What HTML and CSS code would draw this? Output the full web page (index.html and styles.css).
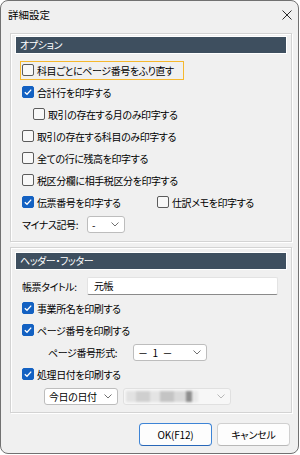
FILE: index.html
```html
<html lang="ja">

<head>
    <title>詳細設定</title>
    <link rel="stylesheet" href="styles.css">
</head>

<body>
    <div class="window">
        <div class="titlebar">
            <span class="title">詳細設定</span>
            <svg class="close" width="10" height="10" viewBox="0 0 10 10">
                <path d="M0.5 0.5 L9.5 9.5 M9.5 0.5 L0.5 9.5" stroke="#2b2b2b" stroke-width="1" fill="none"/>
            </svg>
        </div>

        <div class="content">
            <!-- オプション -->
            <div class="group group-options">
                <div class="group-head">オプション</div>
                <div class="rows">
                    <div class="row">
                        <label class="check focus"><span class="box"></span>科目ごとにページ番号をふり直す</label>
                    </div>
                    <div class="row">
                        <label class="check"><span class="box on"><svg width="10" height="10" viewBox="0 0 10 10"><path d="M1.8 5.2 L4 7.3 L8.2 2.6" stroke="#fff" stroke-width="1.3" fill="none"/></svg></span>合計行を印字する</label>
                    </div>
                    <div class="row sub">
                        <label class="check"><span class="box"></span>取引の存在する月のみ印字する</label>
                    </div>
                    <div class="row">
                        <label class="check"><span class="box"></span>取引の存在する科目のみ印字する</label>
                    </div>
                    <div class="row">
                        <label class="check"><span class="box"></span>全ての行に残高を印字する</label>
                    </div>
                    <div class="row">
                        <label class="check"><span class="box"></span>税区分欄に相手税区分を印字する</label>
                    </div>
                    <div class="row">
                        <label class="check wide"><span class="box on"><svg width="10" height="10" viewBox="0 0 10 10"><path d="M1.8 5.2 L4 7.3 L8.2 2.6" stroke="#fff" stroke-width="1.3" fill="none"/></svg></span>伝票番号を印字する</label>
                        <label class="check"><span class="box"></span>仕訳メモを印字する</label>
                    </div>
                    <div class="row">
                        <span class="field-label minus-label">マイナス記号:</span>
                        <div class="select select-minus">
                            <span>-</span>
                            <svg width="8" height="5" viewBox="0 0 8 5"><path d="M0.5 0.5 L4 4 L7.5 0.5" stroke="#707070" fill="none"/></svg>
                        </div>
                    </div>
                </div>
            </div>

            <!-- ヘッダー・フッター -->
            <div class="group group-header">
                <div class="group-head">ヘッダー・フッター</div>
                <div class="rows">
                    <div class="row">
                        <span class="field-label minus-label">帳票タイトル:</span>
                        <div class="textbox">元帳</div>
                    </div>
                    <div class="row">
                        <label class="check"><span class="box on"><svg width="10" height="10" viewBox="0 0 10 10"><path d="M1.8 5.2 L4 7.3 L8.2 2.6" stroke="#fff" stroke-width="1.3" fill="none"/></svg></span>事業所名を印刷する</label>
                    </div>
                    <div class="row">
                        <label class="check"><span class="box on"><svg width="10" height="10" viewBox="0 0 10 10"><path d="M1.8 5.2 L4 7.3 L8.2 2.6" stroke="#fff" stroke-width="1.3" fill="none"/></svg></span>ページ番号を印刷する</label>
                    </div>
                    <div class="row page-format">
                        <span class="field-label format-label">ページ番号形式:</span>
                        <div class="select select-format">
                            <span class="format-value">－ 1 －</span>
                            <svg width="8" height="5" viewBox="0 0 8 5"><path d="M0.5 0.5 L4 4 L7.5 0.5" stroke="#707070" fill="none"/></svg>
                        </div>
                    </div>
                    <div class="row">
                        <label class="check"><span class="box on"><svg width="10" height="10" viewBox="0 0 10 10"><path d="M1.8 5.2 L4 7.3 L8.2 2.6" stroke="#fff" stroke-width="1.3" fill="none"/></svg></span>処理日付を印刷する</label>
                    </div>
                    <div class="row date-row">
                        <div class="select select-date">
                            <span>今日の日付</span>
                            <svg width="8" height="5" viewBox="0 0 8 5"><path d="M0.5 0.5 L4 4 L7.5 0.5" stroke="#707070" fill="none"/></svg>
                        </div>
                        <div class="select select-blur">
                            <span class="blur"></span>
                            <svg width="8" height="5" viewBox="0 0 8 5"><path d="M0.5 0.5 L4 4 L7.5 0.5" stroke="#b8b8b8" fill="none"/></svg>
                        </div>
                    </div>
                </div>
            </div>

            <div class="buttons">
                <button class="btn default">OK(F12)</button>
                <button class="btn">キャンセル</button>
            </div>
        </div>
    </div>
</body>
</html>
```

FILE: styles.css
```css
* {
    box-sizing: border-box;
}

body {
    margin: 0;
    background: #ffffff;
    font-family: "Noto Sans CJK JP", "Noto Sans", sans-serif;
    font-size: 10px;
    letter-spacing: -0.4px;
    font-feature-settings: "palt";
    color: #000000;
}

.window {
    width: 299px;
    height: 454px;
    border: 1px solid #717171;
    border-radius: 8px;
    background: #f0f0f0;
    overflow: hidden;
    display: flex;
    flex-direction: column;
}

.titlebar {
    height: 27px;
    display: flex;
    align-items: center;
    justify-content: space-between;
    padding: 0 6px 0 7px;
}

.title {
    font-size: 10.5px;
    letter-spacing: 0;
}

.content {
    padding: 0 6px 0 9px;
}

.group {
    border: 1px solid #d3d3d3;
    box-shadow: inset 1px 1px #ffffff, 1px 1px #ffffff;
    padding: 3px 5px 6px 5px;
}

.group-options {
    margin-top: 5px;
}

.group-header {
    margin-top: 5px;
    padding-top: 5px;
    padding-bottom: 5px;
}

.group-head {
    height: 16px;
    line-height: 16px;
    padding-left: 4px;
    background: #3e4f5f;
    color: #ffffff;
    outline: 1px solid #ffffff;
}

.rows {
    margin-top: 6px;
    padding-left: 4px;
}

.row {
    height: 22px;
    display: flex;
    align-items: center;
}

.row.sub {
    padding-left: 11px;
}

.check {
    display: inline-flex;
    align-items: center;
    gap: 3px;
    height: 19px;
    padding: 0 2px 0 1px;
    border: 1px solid transparent;
    white-space: nowrap;
}

.check.focus {
    width: 164px;
    border-color: #f5b82e;
}

.check.wide {
    width: 135px;
}

.box {
    width: 12px;
    height: 12px;
    border: 1px solid #5c5c5c;
    border-radius: 2px;
    background: #f8f8f8;
    display: flex;
    align-items: center;
    justify-content: center;
    flex-shrink: 0;
}

.box.on {
    background: #1361c2;
    border-color: #1361c2;
}

.field-label {
    padding-left: 2px;
    white-space: nowrap;
}

.minus-label {
    width: 67px;
}

.select {
    height: 17px;
    border: 1px solid #bdbdbd;
    border-radius: 3px;
    background: #ffffff;
    display: flex;
    align-items: center;
    justify-content: space-between;
    padding: 0 5px 0 4px;
    white-space: nowrap;
}

.select-minus {
    width: 38px;
}

.textbox {
    width: 191px;
    height: 18px;
    line-height: 16px;
    background: #ffffff;
    border: 1px solid #e3e3e3;
    border-bottom-color: #8a8a8a;
    border-radius: 2px;
    padding-left: 6px;
}

.page-format {
    padding-left: 26px;
}

.format-label {
    width: 87px;
}

.select-format {
    width: 74px;
}

.format-value {
    word-spacing: 3px;
}

.date-row {
    padding-left: 24px;
    gap: 5px;
}

.select-date {
    width: 74px;
}

.select-blur {
    width: 108px;
    border-color: #e0e0e0;
    background: #f7f7f7;
    padding-left: 2px;
}

.blur {
    width: 72px;
    height: 11px;
    filter: blur(1px);
    background: linear-gradient(90deg, #e2e2e2 0 10px, #cfcfcf 10px 24px, #e4e4e4 24px 34px, #c4c4c4 34px 48px, #d9d9d9 48px 60px, #8e8e8e 60px 66px, #e8e8e8 66px);
}

.buttons {
    margin-top: 10px;
    padding-right: 2px;
    display: flex;
    justify-content: flex-end;
    gap: 5px;
}

.btn {
    width: 73px;
    height: 23px;
    border: 1px solid #d0d0d0;
    border-bottom-color: #b8b8b8;
    border-radius: 4px;
    background: #fdfdfd;
    font-family: "Noto Sans CJK JP", "Noto Sans", sans-serif;
    font-size: 10px;
    letter-spacing: -0.2px;
    font-feature-settings: "palt";
    color: #000000;
    padding: 0;
}

.btn.default {
    border-color: #3d84d6;
    border-bottom-color: #2867b8;
}
```
